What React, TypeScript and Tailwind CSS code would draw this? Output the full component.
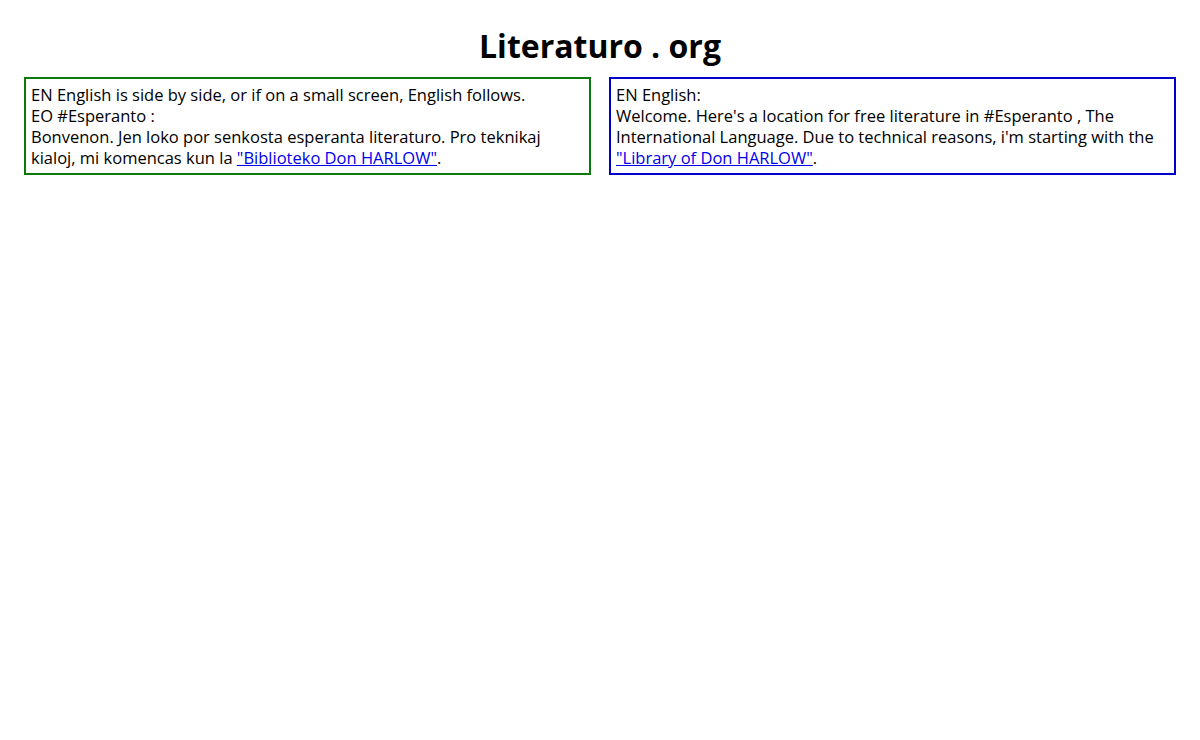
export default function App() {
  return (
    <div className="min-h-screen bg-white text-black" style={{ fontFamily: '"Open Sans", "Noto Sans", sans-serif' }}>
      <h1 className="pt-[26px] pb-[11px] text-center text-[32px] font-bold leading-[40px]">Literaturo . org</h1>
      <div className="flex gap-[18px] px-[24px]">
        <div className="w-[567px] border-2 border-[#0b7a0b] px-[5px] pt-[5px] pb-[5px] text-[16.5px] leading-[21px]">
          EN English is side by side, or if on a small screen, English follows.
          <br />
          EO #Esperanto :
          <br />
          Bonvenon. Jen loko por senkosta esperanta literaturo. Pro teknikaj kialoj, mi komencas kun la{" "}
          <a href="#" className="text-[#0000ee] underline">"Biblioteko Don HARLOW"</a>.
        </div>
        <div className="w-[567px] border-2 border-[#0000cc] px-[5px] pt-[5px] pb-[5px] text-[16.5px] leading-[21px]">
          EN English:
          <br />
          Welcome. Here's a location for free literature in #Esperanto , The International Language. Due to technical reasons, i'm starting with the{" "}
          <a href="#" className="text-[#0000ee] underline">"Library of Don HARLOW"</a>.
        </div>
      </div>
    </div>
  );
}
